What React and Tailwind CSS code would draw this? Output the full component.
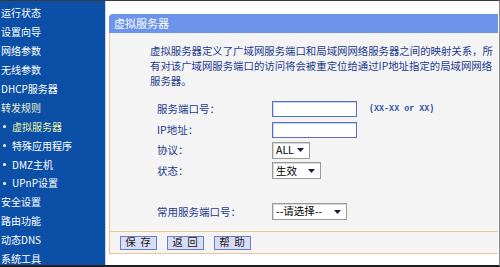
import React from "react";

const menu = [
  { label: "运行状态" },
  { label: "设置向导" },
  { label: "网络参数" },
  { label: "无线参数" },
  { label: "DHCP服务器" },
  { label: "转发规则", tone: "text-[#eef2cc]" },
  { label: "虚拟服务器", sub: true, tone: "text-[#e6f3a8]" },
  { label: "特殊应用程序", sub: true },
  { label: "DMZ主机", sub: true },
  { label: "UPnP设置", sub: true },
  { label: "安全设置" },
  { label: "路由功能" },
  { label: "动态DNS" },
  { label: "系统工具" },
];

function Arrow() {
  return (
    <svg width="7" height="4" viewBox="0 0 7 4" className="shrink-0">
      <path d="M0 0h7L3.5 4z" fill="#1a1a3a" />
    </svg>
  );
}

function Select({ value, width }) {
  return (
    <div
      className={`flex items-center justify-between ${width} h-[17px] border border-[#9a9a9a] bg-white pl-[3px] pr-[5px] text-[10.5px] leading-none text-black shadow-[inset_1px_1px_0_#d8d8d8]`}
    >
      <span>{value}</span>
      <Arrow />
    </div>
  );
}

function TextBox() {
  return (
    <div className="w-[85px] h-[16px] border-[1.5px] border-[#5572c6] bg-white shadow-[inset_1px_1px_0_#c8d2f0]" />
  );
}

function Row({ label, children }) {
  return (
    <div className="flex items-center h-[20.5px]">
      <div className="w-[115px] text-[10.5px] text-[#1d3a8e]">{label}</div>
      {children}
    </div>
  );
}

export default function App() {
  return (
    <div
      className="w-[500px] h-[267px] flex overflow-hidden border-t border-t-[#3a3a3a] border-r border-r-[#8a8a8a] border-b-2 border-b-[#1e1e1e] bg-white"
      style={{ fontFamily: '"Noto Sans CJK SC", "Noto Sans", sans-serif' }}
    >
      {/* sidebar */}
      <div className="w-[106px] shrink-0 bg-[#0b4fa6] pt-[3px] border-r border-r-[#c8d4e4] overflow-hidden">
        {menu.map((m) => (
          <div
            key={m.label}
            className={`h-[18.9px] flex items-center text-[10px] leading-none whitespace-nowrap ${m.tone || "text-white"} ${m.sub ? "pl-[3px]" : "pl-[1px]"}`}
          >
            {m.sub && <span className="w-[3px] h-[3px] rounded-full bg-white mr-[6px]" />}
            {m.label}
          </div>
        ))}
      </div>

      {/* content */}
      <div className="flex-1 pl-[3px] pt-[13px] pr-[1px]">
        <div className="rounded-tl-[4px] h-[19px] bg-[#6b94ea] flex items-center pl-[5px] text-[11px] text-white">
          虚拟服务器
        </div>
        <div className="bg-[#f4f4f4] border-l border-l-[#f0c392] flex flex-col">
          <div className="pl-[40px] pt-[10px] pr-[2px] text-[10.4px] leading-[15px] text-[#1d3a8e] whitespace-nowrap">
            虚拟服务器定义了广域网服务端口和局域网网络服务器之间的映射关系，所
            <br />
            有对该广域网服务端口的访问将会被重定位给通过IP地址指定的局域网网络
            <br />
            服务器。
          </div>

          <div className="pl-[47px] pt-[11px] flex flex-col">
            <Row label="服务端口号：">
              <TextBox />
              <span
                className="ml-[12px] text-[8.4px] text-[#3050a8] font-bold"
                style={{ fontFamily: '"Liberation Mono", monospace' }}
              >
                (XX-XX or XX)
              </span>
            </Row>
            <Row label="IP地址：">
              <TextBox />
            </Row>
            <Row label="协议：">
              <Select value="ALL" width="w-[38px]" />
            </Row>
            <Row label="状态：">
              <Select value="生效" width="w-[49px]" />
            </Row>
            <div className="flex items-center h-[19px] mt-[21px] mb-[10px]">
              <div className="w-[115px] text-[10.5px] text-[#1d3a8e]">常用服务端口号：</div>
              <Select value="--请选择--" width="w-[75px]" />
            </div>
          </div>

          <div className="border-t border-t-[#f0c392] border-b border-b-[#f0c392] h-[23px] flex items-center gap-[10px] pl-[10px]">
            {["保 存", "返 回", "帮 助"].map((b) => (
              <button
                key={b}
                className="w-[37px] h-[14px] border border-[#6d7cc8] bg-[#d8ddf6] text-[10.5px] leading-none text-[#1a1a1a] tracking-[1px]"
              >
                {b}
              </button>
            ))}
          </div>
        </div>
      </div>
    </div>
  );
}
